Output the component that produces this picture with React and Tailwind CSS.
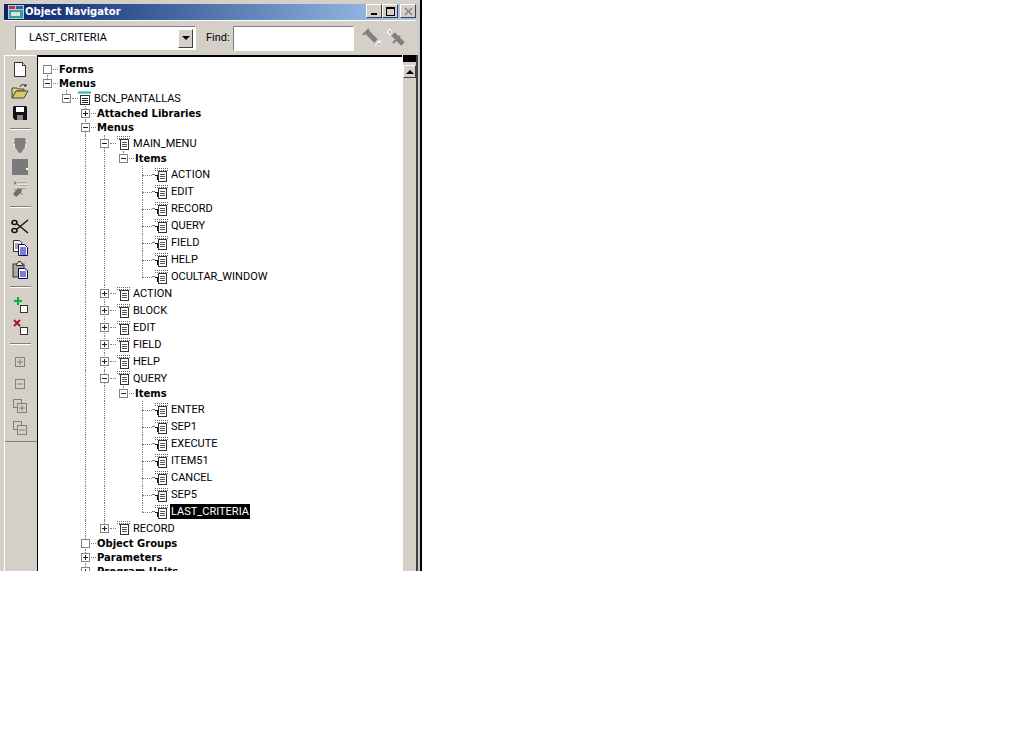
import React from 'react';

const tree = [
  { h: 14, label: 'Forms', bold: true, level: 0, box: 'empty', down: true },
  { h: 14, label: 'Menus', bold: true, level: 0, box: 'minus', up: true },
  { h: 16, label: 'BCN_PANTALLAS', level: 1, box: 'minus', icon: 'module', up: true },
  { h: 14, label: 'Attached Libraries', bold: true, level: 2, box: 'plus', up: true, down: true },
  { h: 15, label: 'Menus', bold: true, level: 2, box: 'minus', up: true, down: true },
  { h: 16, label: 'MAIN_MENU', level: 3, box: 'minus', icon: 'menu', up: true, down: true, guides: [2] },
  { h: 15, label: 'Items', bold: true, level: 4, box: 'minus', up: true, guides: [2, 3] },
  { h: 17, label: 'ACTION', level: 5, icon: 'item', up: true, down: true, guides: [2, 3] },
  { h: 17, label: 'EDIT', level: 5, icon: 'item', up: true, down: true, guides: [2, 3] },
  { h: 17, label: 'RECORD', level: 5, icon: 'item', up: true, down: true, guides: [2, 3] },
  { h: 17, label: 'QUERY', level: 5, icon: 'item', up: true, down: true, guides: [2, 3] },
  { h: 17, label: 'FIELD', level: 5, icon: 'item', up: true, down: true, guides: [2, 3] },
  { h: 17, label: 'HELP', level: 5, icon: 'item', up: true, down: true, guides: [2, 3] },
  { h: 17, label: 'OCULTAR_WINDOW', level: 5, icon: 'item', up: true, guides: [2, 3] },
  { h: 17, label: 'ACTION', level: 3, box: 'plus', icon: 'menu', up: true, down: true, guides: [2] },
  { h: 17, label: 'BLOCK', level: 3, box: 'plus', icon: 'menu', up: true, down: true, guides: [2] },
  { h: 17, label: 'EDIT', level: 3, box: 'plus', icon: 'menu', up: true, down: true, guides: [2] },
  { h: 17, label: 'FIELD', level: 3, box: 'plus', icon: 'menu', up: true, down: true, guides: [2] },
  { h: 17, label: 'HELP', level: 3, box: 'plus', icon: 'menu', up: true, down: true, guides: [2] },
  { h: 16, label: 'QUERY', level: 3, box: 'minus', icon: 'menu', up: true, down: true, guides: [2] },
  { h: 15, label: 'Items', bold: true, level: 4, box: 'minus', up: true, guides: [2, 3] },
  { h: 17, label: 'ENTER', level: 5, icon: 'item', up: true, down: true, guides: [2, 3] },
  { h: 17, label: 'SEP1', level: 5, icon: 'item', up: true, down: true, guides: [2, 3] },
  { h: 17, label: 'EXECUTE', level: 5, icon: 'item', up: true, down: true, guides: [2, 3] },
  { h: 17, label: 'ITEM51', level: 5, icon: 'item', up: true, down: true, guides: [2, 3] },
  { h: 17, label: 'CANCEL', level: 5, icon: 'item', up: true, down: true, guides: [2, 3] },
  { h: 17, label: 'SEP5', level: 5, icon: 'item', up: true, down: true, guides: [2, 3] },
  { h: 17, label: 'LAST_CRITERIA', level: 5, icon: 'item', up: true, selected: true, guides: [2, 3] },
  { h: 16, label: 'RECORD', level: 3, box: 'plus', icon: 'menu', up: true, guides: [2] },
  { h: 14, label: 'Object Groups', bold: true, level: 2, box: 'empty', up: true, down: true },
  { h: 14, label: 'Parameters', bold: true, level: 2, box: 'plus', up: true, down: true },
  { h: 14, label: 'Program Units', bold: true, level: 2, box: 'plus', up: true, down: true },
];

const MenuIcon = ({ item }) => (
  <svg width="14" height="14" viewBox="0 0 14 14" className="shrink-0">
    <path d="M1 .5h13M1 2.5h13" stroke="#666" strokeDasharray="1 1" fill="none" />
    <rect x="4.5" y="3.5" width="8" height="10" fill="#fff" stroke="#333" />
    <path d="M6 6.5h5M6 8.5h5M6 10.5h5" stroke="#555" fill="none" />
    {item ? <path d="M1 7.5h3M3.5 7v5" stroke="#111" fill="none" /> : <path d="M3 3.5h2" stroke="#333" fill="none" />}
  </svg>
);

const ModuleIcon = () => (
  <svg width="13" height="14" viewBox="0 0 13 14" className="shrink-0">
    <path d="M0 1.5h13" stroke="#21b5b5" strokeWidth="2" fill="none" />
    <rect x="2.5" y="4.5" width="9" height="9" fill="#fff" stroke="#333" />
    <path d="M4 7.5h6M4 9.5h6M4 11.5h6" stroke="#222" fill="none" />
  </svg>
);

const Expander = ({ type }) => (
  <span className="flex h-[9px] w-[9px] items-center justify-center border border-[#848484] bg-white">
    {type !== 'empty' && (
      <svg width="7" height="7" viewBox="0 0 7 7">
        <path d="M1 3.5h5" stroke="#222" fill="none" />
        {type === 'plus' && <path d="M3.5 1v5" stroke="#222" fill="none" />}
      </svg>
    )}
  </span>
);

function TreeRow({ row }) {
  const guides = row.guides || [];
  const cells = [];
  for (let i = 0; i < row.level; i++) {
    cells.push(
      <div key={i} className="flex h-full w-[19px] shrink-0 justify-center">
        {guides.includes(i) && <div className="h-full w-px border-l border-dotted border-[#808080]" />}
      </div>
    );
  }
  return (
    <div className="flex shrink-0 items-center" style={{ height: row.h }}>
      {cells}
      <div className="relative flex h-full w-[19px] shrink-0 items-center justify-center">
        {row.up && <div className="absolute left-[9px] top-0 h-1/2 w-px border-l border-dotted border-[#808080]" />}
        {row.down && <div className="absolute bottom-0 left-[9px] h-1/2 w-px border-l border-dotted border-[#808080]" />}
        {row.box && <span className="relative"><Expander type={row.box} /></span>}
        {!row.box && <div className="absolute left-[9px] top-1/2 h-px w-[10px] border-t border-dotted border-[#808080]" />}
      </div>
      {row.box ? (
        <div className={`ml-[-4px] h-px shrink-0 border-t border-dotted border-[#808080] ${row.icon ? 'w-[6px]' : 'w-[5px]'}`} />
      ) : (
        <div className="h-px w-[2px] shrink-0 border-t border-dotted border-[#808080]" />
      )}
      {row.icon === 'module' && <ModuleIcon />}
      {row.icon === 'menu' && <MenuIcon />}
      {row.icon === 'item' && <MenuIcon item />}
      {row.bold ? (
        <span className="ml-[1px] mt-[1px] whitespace-nowrap font-['DejaVu_Sans'] text-[10px] font-bold leading-[14px] text-black">
          {row.label}
        </span>
      ) : (
        <span className={`ml-[2px] whitespace-nowrap px-[1px] text-[11px] leading-[15px] ${row.selected ? 'bg-black text-white' : 'text-black'}`}>
          {row.label}
        </span>
      )}
    </div>
  );
}

const Sep = ({ className }) => <div className={`h-[2px] w-[21px] shrink-0 border-t border-[#808080] bg-white ${className}`} />;

const ToolBtn = ({ children }) => (
  <div className="flex h-[22px] w-[22px] shrink-0 items-center justify-center">{children}</div>
);

function SideBar() {
  return (
    <div className="flex h-[387px] w-[32px] shrink-0 flex-col items-center border-b border-t border-b-[#808080] border-t-white pr-[2px] pt-[2px]">
      <ToolBtn>
        <svg width="14" height="15" viewBox="0 0 14 15"><path d="M1.5.5h8l3 3v11h-11z" fill="#fff" stroke="#333" /><path d="M9.5.5v3h3" fill="#ddd" stroke="#333" /></svg>
      </ToolBtn>
      <ToolBtn>
        <svg width="18" height="16" viewBox="0 0 18 16"><path d="M1 5h5l1 1h6v2H5L1 15z" fill="#e8d870" stroke="#444" /><path d="M5 8h12l-4 7H1z" fill="#d8c860" stroke="#444" /><path d="M9 4c1-3 4-3 6-1l-2 0M15 3v-2" stroke="#222" fill="none" /></svg>
      </ToolBtn>
      <ToolBtn>
        <svg width="14" height="14" viewBox="0 0 14 14"><path d="M0 1l1-1h12l1 1v13H2l-2-2z" fill="#111" /><rect x="3" y="1" width="8" height="5" fill="#fff" /><rect x="4" y="9" width="6" height="5" fill="#888" /></svg>
      </ToolBtn>
      <Sep className="mb-[4px] mt-[4px]" />
      <ToolBtn>
        <svg width="16" height="17" viewBox="0 0 16 17"><path d="M3 1h10l1 2v3l-1 1v3l-2 3-2 3H7l-2-3-2-3V7L2 6V3z" fill="#808080" /><path d="M1 4h2M1 8h2M13 4h2M13 9h2" stroke="#fff" /></svg>
      </ToolBtn>
      <ToolBtn>
        <svg width="16" height="16" viewBox="0 0 16 16"><rect width="16" height="16" fill="#7a7a7a" /><rect x="14" y="9" width="2" height="2" fill="#fff" /></svg>
      </ToolBtn>
      <ToolBtn>
        <svg width="18" height="18" viewBox="0 0 18 18"><path d="M3 1l3 2-3 2z" fill="#808080" /><path d="M7 3h9M8 6h8M10 8h5" stroke="#808080" /><path d="M7 4h9M8 7h8" stroke="#fff" /><path d="M2 14l5-6 4 1-1 4-5 4z" fill="#707070" /><path d="M3 9l2 2M10 13l2 2" stroke="#808080" /></svg>
      </ToolBtn>
      <Sep className="mb-[7px] mt-[6px]" />
      <ToolBtn>
        <svg width="18" height="15" viewBox="0 0 18 15"><path d="M17 1L6 10M17 14L6 5" stroke="#111" strokeWidth="1.4" fill="none" /><ellipse cx="3.5" cy="3.5" rx="2.5" ry="2" fill="none" stroke="#111" strokeWidth="1.6" /><ellipse cx="3.5" cy="11.5" rx="2.5" ry="2" fill="none" stroke="#111" strokeWidth="1.6" /></svg>
      </ToolBtn>
      <ToolBtn>
        <svg width="16" height="16" viewBox="0 0 16 16"><path d="M1.5.5h6l2 2v9h-8z" fill="#fff" stroke="#333" /><path d="M3 4h4M3 6h4M3 8h4" stroke="#555" /><path d="M6.5 4.5h6l3 3v8h-9z" fill="#fff" stroke="#000080" /><path d="M8 8h6M8 10h6M8 12h6M8 14h6" stroke="#000080" /></svg>
      </ToolBtn>
      <ToolBtn>
        <svg width="16" height="18" viewBox="0 0 16 18"><rect x="1" y="3" width="11" height="13" fill="#a8a89c" stroke="#333" /><path d="M4.5 3.5l2-3h2l2 3v1h-6z" fill="#e8e4c0" stroke="#222" /><path d="M6.5 7.5h6l3 2v8h-9z" fill="#fff" stroke="#000080" /><path d="M8 11h6M8 13h6M8 15h6" stroke="#000080" /></svg>
      </ToolBtn>
      <Sep className="mb-[6px] mt-[5px]" />
      <ToolBtn>
        <svg width="18" height="17" viewBox="0 0 18 17"><path d="M3 3h3V0h2v3h3v2H8v3H6V5H3z" fill="#10b030" /><rect x="9.5" y="8.5" width="7" height="7" fill="#fff" stroke="#333" /></svg>
      </ToolBtn>
      <ToolBtn>
        <svg width="18" height="17" viewBox="0 0 18 17"><path d="M3 1l6 6M9 1L3 7" stroke="#b01030" strokeWidth="2" fill="none" /><rect x="9.5" y="8.5" width="7" height="7" fill="#fff" stroke="#333" /></svg>
      </ToolBtn>
      <Sep className="mb-[6px] mt-[5px]" />
      <ToolBtn>
        <svg width="10" height="10" viewBox="0 0 10 10"><rect x=".5" y=".5" width="9" height="9" fill="none" stroke="#808080" /><path d="M2 5h6M5 2v6" stroke="#808080" /></svg>
      </ToolBtn>
      <ToolBtn>
        <svg width="10" height="10" viewBox="0 0 10 10"><rect x=".5" y=".5" width="9" height="9" fill="none" stroke="#808080" /><path d="M2 5h6" stroke="#808080" /></svg>
      </ToolBtn>
      <ToolBtn>
        <svg width="14" height="14" viewBox="0 0 14 14"><rect x=".5" y=".5" width="8" height="8" fill="none" stroke="#808080" /><rect x="4.5" y="4.5" width="9" height="9" fill="#d4d0c8" stroke="#808080" /><path d="M6 9h6M9 6v6" stroke="#808080" /></svg>
      </ToolBtn>
      <ToolBtn>
        <svg width="14" height="14" viewBox="0 0 14 14"><rect x=".5" y=".5" width="8" height="8" fill="none" stroke="#808080" /><rect x="4.5" y="4.5" width="9" height="9" fill="#d4d0c8" stroke="#808080" /><path d="M6 9h6" stroke="#808080" /></svg>
      </ToolBtn>
    </div>
  );
}

const WinBtn = ({ children, className = '' }) => (
  <div className={`flex h-[14px] w-[16px] items-center justify-center border border-t-white border-l-white border-r-[#404040] border-b-[#404040] bg-[#d4d0c8] ${className}`}>
    {children}
  </div>
);

const FindNext = () => (
  <svg width="20" height="20" viewBox="0 0 20 20" className="shrink-0">
    <path d="M4 3l10 10" stroke="#808080" strokeWidth="5" fill="none" />
    <path d="M1 7l6-6" stroke="#808080" strokeWidth="2" fill="none" />
    <path d="M13 18l6-6" stroke="#fff" strokeWidth="1" fill="none" />
    <path d="M15 15h4M17 13v5" stroke="#fff" strokeWidth="1.5" fill="none" />
    <path d="M16 16h2" stroke="#555" fill="none" />
  </svg>
);

const FindPrev = () => (
  <svg width="20" height="20" viewBox="0 0 20 20" className="shrink-0">
    <path d="M7 6l10 10" stroke="#808080" strokeWidth="5" fill="none" />
    <path d="M7 15l7-7" stroke="#808080" strokeWidth="2" fill="none" />
    <path d="M1 4h5M3.5 1v6" stroke="#fff" strokeWidth="1.5" fill="none" />
    <path d="M3 4h2" stroke="#555" fill="none" />
  </svg>
);

export default function App() {
  return (
    <div className="h-[735px] w-[1024px] bg-white font-['Roboto',sans-serif] text-[11px] text-black">
      <div className="flex h-[571px] w-[422px] overflow-hidden border-r-2 border-black bg-[#d4d0c8] pt-[4px]">
        <div className="flex w-[416px] shrink-0 flex-col pl-[4px]">
          {/* Title bar */}
          <div className="flex h-[16px] w-[413px] shrink-0 items-center bg-gradient-to-r from-[#0a246a] to-[#a6caf0] pr-[1px]">
            <svg width="16" height="14" viewBox="0 0 16 14" className="ml-[4px] shrink-0">
              <rect width="16" height="14" fill="#c8c8c8" />
              <rect x="1" y="1" width="6" height="3" fill="#b03070" />
              <rect x="8" y="1" width="7" height="3" fill="#3060a0" />
              <rect x="1" y="5" width="14" height="8" fill="#30a0a0" />
              <rect x="3" y="7" width="9" height="4" fill="#e0e0e0" />
            </svg>
            <span className="mb-[2px] ml-[1px] font-['DejaVu_Sans'] text-[10px] font-bold text-white">Object Navigator</span>
            <div className="ml-auto flex self-start">
              <WinBtn>
                <span className="mt-[6px] h-[2px] w-[6px] bg-black" />
              </WinBtn>
              <WinBtn className="mr-[2px]">
                <span className="h-[9px] w-[9px] border border-t-2 border-black" />
              </WinBtn>
              <WinBtn>
                <svg width="9" height="9" viewBox="0 0 9 9"><path d="M1 1l7 7M8 1L1 8" stroke="#808080" strokeWidth="1.4" fill="none" /></svg>
              </WinBtn>
            </div>
          </div>

          {/* Find toolbar */}
          <div className="flex h-[35px] shrink-0 items-center border-t border-white pl-[11px]">
            <div className="flex h-[24px] w-[181px] shrink-0 items-center border border-t-[#808080] border-l-[#808080] border-r-white border-b-white bg-white pl-[13px] pr-[2px]">
              <span className="text-[11px]">LAST_CRITERIA</span>
              <div className="ml-auto flex h-[19px] w-[15px] items-center justify-center border border-t-white border-l-white border-r-[#404040] border-b-[#404040] bg-[#d4d0c8]">
                <span className="h-0 w-0 border-x-[4px] border-t-[4px] border-x-transparent border-t-black" />
              </div>
            </div>
            <span className="ml-[10px] w-[23px] shrink-0 text-[11px]">Find:</span>
            <div className="ml-[4px] h-[25px] w-[121px] shrink-0 border border-t-[#808080] border-l-[#808080] border-r-white border-b-white bg-white" />
            <div className="ml-[8px] flex gap-[4px]">
              <FindNext />
              <FindPrev />
            </div>
          </div>

          <div className="flex min-h-0 flex-1">
            <div className="h-full w-px shrink-0 bg-white" />
            <SideBar />
            <div className="flex h-full min-w-0 flex-1 border-l border-black">
              <div className="flex h-full w-[364px] shrink-0 flex-col overflow-hidden border-t-2 border-black bg-white pt-[5px]">
                {tree.map((row, i) => (
                  <TreeRow key={i} row={row} />
                ))}
              </div>
              {/* Scrollbar */}
              <div className="flex h-full w-[14px] shrink-0 flex-col border-l border-white bg-[#d4d0c8]">
                <div className="h-[7px] shrink-0 bg-black" />
                <div className="mt-[3px] flex h-[13px] items-center justify-center border border-t-white border-l-white border-r-[#404040] border-b-[#404040]">
                  <span className="h-0 w-0 border-x-[4px] border-b-[4px] border-x-transparent border-b-black" />
                </div>
              </div>
            </div>
          </div>
        </div>
        <div className="mt-[51px] h-full w-[2px] shrink-0 bg-[#404040]" />
        <div className="h-full w-[2px] shrink-0 bg-[#c8c8c8]" />
      </div>
    </div>
  );
}
